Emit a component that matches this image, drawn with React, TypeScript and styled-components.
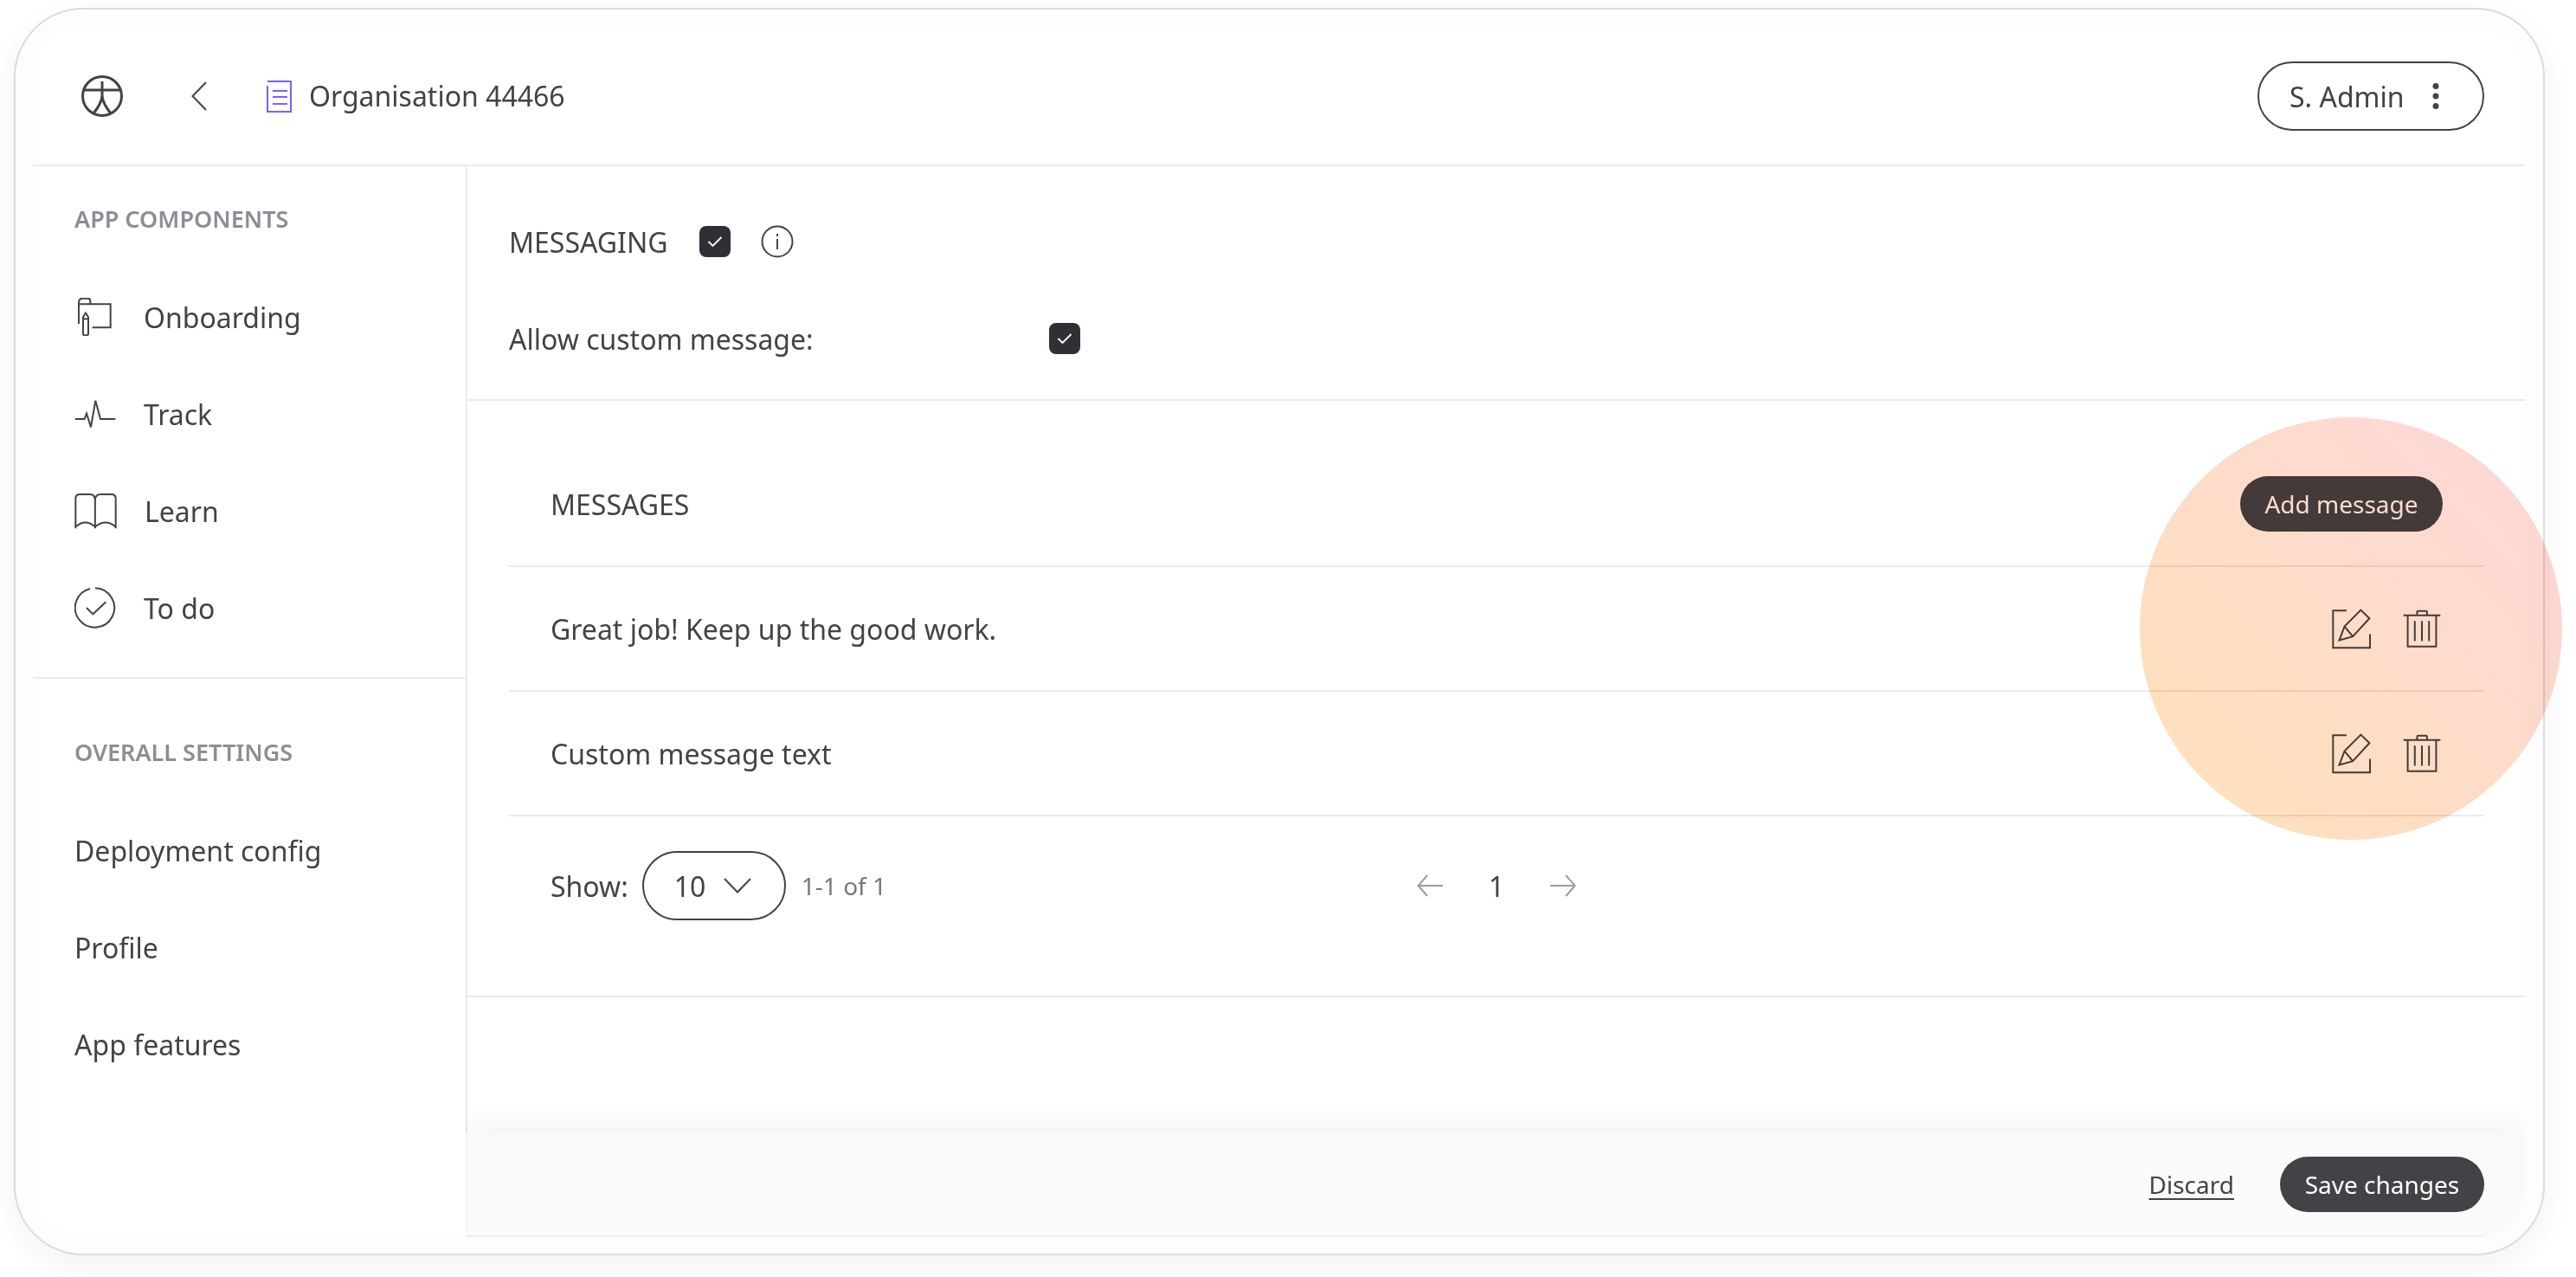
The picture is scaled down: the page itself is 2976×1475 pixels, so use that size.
import styled, { createGlobalStyle } from "styled-components";
import { ReactNode } from "react";

const GlobalStyle = createGlobalStyle`
  html, body {
    margin: 0;
    padding: 0;
    background: #fff;
  }
  * {
    box-sizing: border-box;
  }
  body {
    font-family: "Noto Sans", "Open Sans", sans-serif;
    color: #434347;
  }
`;

const Page = styled.div`
  width: 2976px;
  height: 1475px;
  padding: 9px 0 0 16px;
  overflow: hidden;
`;

const Frame = styled.div`
  position: relative;
  width: 2924px;
  height: 1441px;
  padding: 19px 20px 19px 20px;
  background: #fdfdfd;
  border: 2px solid #dcdcdc;
  border-radius: 80px;
  box-shadow: 0 12px 36px rgba(0, 0, 0, 0.05);
`;

const Inner = styled.div`
  display: flex;
  flex-direction: column;
  height: 100%;
  background: #fff;
  border-radius: 60px;
  overflow: hidden;
`;

const Header = styled.header`
  display: flex;
  align-items: center;
  flex: 0 0 162px;
  padding: 2px 48px 0 56px;
  border-bottom: 2px solid #ebebeb;
`;

const BackButton = styled.div`
  display: flex;
  margin-left: 79px;
  margin-right: 69px;
`;

const DocName = styled.div`
  display: flex;
  align-items: center;
  gap: 20px;
  font-size: 32px;
  line-height: 44px;
`;

const UserButton = styled.div`
  display: flex;
  align-items: center;
  justify-content: space-between;
  width: 262px;
  height: 80px;
  margin-left: auto;
  padding: 0 50px 0 35px;
  border: 2px solid #434347;
  border-radius: 40px;
  font-size: 32px;
`;

const Body = styled.div`
  display: flex;
  flex: 1;
  min-height: 0;
`;

const Sidebar = styled.aside`
  flex: 0 0 500px;
`;

const SideGroup = styled.div<{ $top: number; $bottom?: boolean }>`
  padding: ${(p) => p.$top}px 0 ${(p) => (p.$bottom ? 24 : 0)}px 48px;
  border-bottom: ${(p) => (p.$bottom ? "2px solid #ebebeb" : "none")};
`;

const SideLabel = styled.div`
  height: 40px;
  margin-bottom: 37px;
  font-size: 27px;
  line-height: 40px;
  font-weight: 600;
  color: #8b8e94;
`;

const SideItem = styled.div`
  display: flex;
  align-items: center;
  height: 112px;
  font-size: 32px;
`;

const IconSlot = styled.div`
  display: flex;
  justify-content: center;
  flex: 0 0 48px;
  margin-right: 32px;
`;

const Main = styled.main`
  display: flex;
  flex-direction: column;
  flex: 1;
  min-width: 0;
  border-left: 2px solid #ebebeb;
  clip-path: inset(0);
`;

const TopSection = styled.section`
  padding: 31px 49px 14px 48px;
  border-bottom: 2px solid #ebebeb;
`;

const SettingRow = styled.div`
  display: flex;
  align-items: center;
  height: 112px;
  font-size: 32px;
`;

const AllowLabel = styled.span`
  width: 624px;
`;

const Checkbox = styled.div<{ $left?: number }>`
  display: flex;
  align-items: center;
  justify-content: center;
  width: 36px;
  height: 36px;
  margin-left: ${(p) => p.$left ?? 0}px;
  background: #2f3036;
  border-radius: 8px;
`;

const InfoIcon = styled.div`
  display: flex;
  margin-left: 35px;
`;

const ListSection = styled.section`
  padding: 48px 48px 87px 48px;
  border-bottom: 2px solid #ebebeb;
`;

const ListHead = styled.div`
  display: flex;
  align-items: center;
  justify-content: space-between;
  height: 144px;
  padding: 0 48px;
  font-size: 32px;
  border-bottom: 2px solid #ebebeb;
`;

const MessageRow = styled.div`
  display: flex;
  align-items: center;
  justify-content: space-between;
  height: 144px;
  padding: 0 50px 0 48px;
  font-size: 32px;
  border-bottom: 2px solid #ebebeb;
`;

const RowActions = styled.div`
  display: flex;
  align-items: center;
  gap: 36px;
`;

const PillButton = styled.div<{ $width: number }>`
  display: flex;
  align-items: center;
  justify-content: center;
  width: ${(p) => p.$width}px;
  height: 64px;
  background: #434347;
  border-radius: 32px;
  color: #fff;
  font-size: 28px;
`;

const Pagination = styled.div`
  display: grid;
  grid-template-columns: 1fr auto 1fr;
  align-items: center;
  padding: 40px 48px 0;
  font-size: 32px;
`;

const ShowGroup = styled.div`
  display: flex;
  align-items: center;
`;

const SelectBox = styled.div`
  display: flex;
  align-items: center;
  justify-content: space-between;
  width: 166px;
  height: 80px;
  margin: 0 18px 0 16px;
  padding: 0 38px 0 35px;
  border: 2px solid #434347;
  border-radius: 40px;
`;

const RangeText = styled.span`
  font-size: 28px;
  color: #75777c;
`;

const PageNav = styled.div`
  display: flex;
  align-items: center;
  gap: 53px;
`;

const Spacer = styled.div`
  flex: 1;
`;

const Footer = styled.footer`
  display: flex;
  align-items: center;
  justify-content: flex-end;
  gap: 53px;
  flex: 0 0 120px;
  margin-left: -2px;
  padding: 0 48px 0 0;
  background: #fafafa;
  border-bottom: 2px solid #ededed;
  border-left: 2px solid #f6f6f6;
  box-shadow: 0 -10px 34px rgba(0, 0, 0, 0.05);
  font-size: 28px;
`;

const DiscardLink = styled.span`
  text-decoration: underline;
  text-underline-offset: 5px;
`;

const Glow = styled.div`
  position: absolute;
  left: 2454px;
  top: 471px;
  width: 488px;
  height: 488px;
  border-radius: 50%;
  background: linear-gradient(45deg, #fee2b8, #fcd7d9);
  mix-blend-mode: multiply;
  pointer-events: none;
`;

const stroke = "#434347";

function Logo() {
  return (
    <svg width="48" height="48" viewBox="0 0 48 48" fill="none" stroke={stroke} strokeWidth="3">
      <circle cx="24" cy="24" r="22.5" />
      <path d="M2 17H46M24 7V24M24 24C23 33 18 39 14 44M24 24C25 33 30 39 34 44" />
    </svg>
  );
}

function Chevron() {
  return (
    <svg width="18" height="34" viewBox="0 0 18 34" fill="none" stroke={stroke} strokeWidth="2">
      <path d="M17 1L1.5 17L17 33" />
    </svg>
  );
}

function DocIcon() {
  return (
    <svg width="29" height="37" viewBox="0 0 29 37" fill="none" stroke="#7b61ff" strokeWidth="2">
      <path d="M1 1H28V36H1V6" />
      <path d="M7 12H24M7 19H24M7 27H24" />
    </svg>
  );
}

function OnboardingIcon() {
  return (
    <svg width="40" height="44" viewBox="95 45 120 132" fill="none" stroke={stroke} strokeWidth="6">
      <path d="M98 135V62Q98 47 112 47H130Q138 47 138 55V67M98 67H208V148H145" />
      <path d="M113 112L122 97L131 112V170Q131 175 122 175Q113 175 113 170Z" />
      <path d="M113 118H131" />
    </svg>
  );
}

function TrackIcon() {
  return (
    <svg width="48" height="34" viewBox="80 395 144 102" fill="none" stroke={stroke} strokeWidth="6">
      <path d="M82 464H115L122 445L137 492L153 400L170 464H222" />
    </svg>
  );
}

function LearnIcon() {
  return (
    <svg width="49" height="43" viewBox="76 720 148 128" fill="none" stroke={stroke} strokeWidth="6">
      <path d="M80 844V740Q80 725 95 725H130Q148 725 148 745V844" />
      <path d="M148 745Q148 725 168 725H205Q220 725 220 740V844" />
      <path d="M80 838Q115 808 148 838M148 838Q185 808 220 838" />
    </svg>
  );
}

function TodoIcon() {
  return (
    <svg width="48" height="48" viewBox="76 1046 144 144" fill="none" stroke={stroke} strokeWidth="6">
      <path d="M148 1050A68 68 0 1 1 130 1052" />
      <path d="M118 1118L140 1140L185 1098" />
    </svg>
  );
}

function CheckMark() {
  return (
    <svg width="18" height="14" viewBox="0 0 18 14" fill="none" stroke="#fff" strokeWidth="1.8">
      <path d="M1.5 7L6.5 12L16.5 2" />
    </svg>
  );
}

function Info() {
  return (
    <svg width="38" height="38" viewBox="0 0 38 38" fill="none" stroke={stroke} strokeWidth="2">
      <circle cx="19" cy="19" r="17.5" />
      <path d="M19 16V28M19 10V13" />
    </svg>
  );
}

function EditIcon() {
  return (
    <svg width="47" height="47" viewBox="72 68 140 142" fill="none" stroke={stroke} strokeWidth="6">
      <path d="M125 75H78V205H207V157" />
      <path d="M100 178L118 130L175 73L205 102L147 165Z" />
      <path d="M118 130L147 165" />
    </svg>
  );
}

function TrashIcon() {
  return (
    <svg width="44" height="45" viewBox="316 72 134 136" fill="none" stroke={stroke} strokeWidth="6">
      <path d="M318 92H448" />
      <path d="M366 92V80Q366 77 370 77H397Q401 77 401 80V92" />
      <path d="M333 92V202H433V92" />
      <path d="M358 112V183M383 112V183M408 112V183" />
    </svg>
  );
}

function ArrowLeft() {
  return (
    <svg width="30" height="26" viewBox="0 0 30 26" fill="none" stroke="#9a9ca1" strokeWidth="2">
      <path d="M30 13H2M12 1L1.5 13L12 25" />
    </svg>
  );
}

function ArrowRight() {
  return (
    <svg width="30" height="26" viewBox="0 0 30 26" fill="none" stroke="#9a9ca1" strokeWidth="2">
      <path d="M0 13H28M18 1L28.5 13L18 25" />
    </svg>
  );
}

function SelectChevron() {
  return (
    <svg width="32" height="18" viewBox="0 0 32 18" fill="none" stroke={stroke} strokeWidth="2">
      <path d="M1 1L16 16.5L31 1" />
    </svg>
  );
}

function Dots() {
  return (
    <svg width="8" height="32" viewBox="0 0 8 32" fill={stroke}>
      <circle cx="4" cy="4.5" r="3.5" />
      <circle cx="4" cy="16" r="3.5" />
      <circle cx="4" cy="27.5" r="3.5" />
    </svg>
  );
}

interface ComponentItem {
  label: string;
  icon: ReactNode;
}

const appComponents: ComponentItem[] = [
  { label: "Onboarding", icon: <OnboardingIcon /> },
  { label: "Track", icon: <TrackIcon /> },
  { label: "Learn", icon: <LearnIcon /> },
  { label: "To do", icon: <TodoIcon /> },
];

const overallSettings = ["Deployment config", "Profile", "App features"];
const messages = ["Great job! Keep up the good work.", "Custom message text"];

function App() {
  return (
    <Page>
      <GlobalStyle />
      <Frame>
        <Inner>
          <Header>
            <Logo />
            <BackButton>
              <Chevron />
            </BackButton>
            <DocName>
              <DocIcon />
              Organisation 44466
            </DocName>
            <UserButton>
              S. Admin
              <Dots />
            </UserButton>
          </Header>
          <Body>
            <Sidebar>
              <SideGroup $top={41} $bottom>
                <SideLabel>APP COMPONENTS</SideLabel>
                {appComponents.map((item) => (
                  <SideItem key={item.label}>
                    <IconSlot>{item.icon}</IconSlot>
                    {item.label}
                  </SideItem>
                ))}
              </SideGroup>
              <SideGroup $top={65}>
                <SideLabel>OVERALL SETTINGS</SideLabel>
                {overallSettings.map((label) => (
                  <SideItem key={label}>{label}</SideItem>
                ))}
              </SideGroup>
            </Sidebar>
            <Main>
              <TopSection>
                <SettingRow>
                  MESSAGING
                  <Checkbox $left={36}>
                    <CheckMark />
                  </Checkbox>
                  <InfoIcon>
                    <Info />
                  </InfoIcon>
                </SettingRow>
                <SettingRow>
                  <AllowLabel>Allow custom message:</AllowLabel>
                  <Checkbox>
                    <CheckMark />
                  </Checkbox>
                </SettingRow>
              </TopSection>
              <ListSection>
                <ListHead>
                  MESSAGES
                  <PillButton $width={234}>Add message</PillButton>
                </ListHead>
                {messages.map((text) => (
                  <MessageRow key={text}>
                    {text}
                    <RowActions>
                      <EditIcon />
                      <TrashIcon />
                    </RowActions>
                  </MessageRow>
                ))}
                <Pagination>
                  <ShowGroup>
                    Show:
                    <SelectBox>
                      10
                      <SelectChevron />
                    </SelectBox>
                    <RangeText>1-1 of 1</RangeText>
                  </ShowGroup>
                  <PageNav>
                    <ArrowLeft />1
                    <ArrowRight />
                  </PageNav>
                </Pagination>
              </ListSection>
              <Spacer />
              <Footer>
                <DiscardLink>Discard</DiscardLink>
                <PillButton $width={236}>Save changes</PillButton>
              </Footer>
            </Main>
          </Body>
        </Inner>
        <Glow />
      </Frame>
    </Page>
  );
}

export default App;
